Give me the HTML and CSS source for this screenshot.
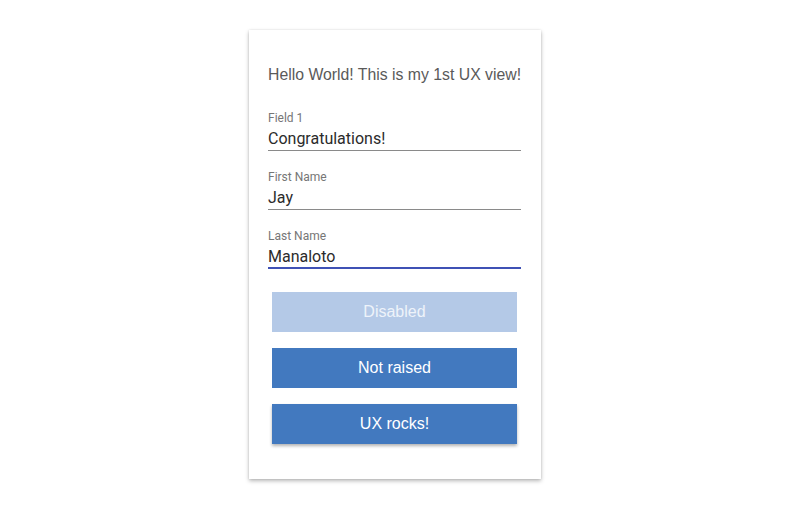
FILE: index.html
```html
<!DOCTYPE html>
<html>
<head>
<meta charset="utf-8">
<link rel="stylesheet" href="styles.css">
</head>
<body>
<div class="card">
  <div class="title">Hello World! This is my 1st UX view!</div>
  <div class="field">
    <div class="label">Field 1</div>
    <div class="value">Congratulations!</div>
  </div>
  <div class="field">
    <div class="label">First Name</div>
    <div class="value">Jay</div>
  </div>
  <div class="field focused">
    <div class="label">Last Name</div>
    <div class="value">Manaloto</div>
  </div>
  <div class="buttons">
    <div class="btn disabled">Disabled</div>
    <div class="btn">Not raised</div>
    <div class="btn raised">UX rocks!</div>
  </div>
</div>
</body>
</html>
```
FILE: styles.css
```css
html, body {
  margin: 0;
  padding: 0;
  background: #ffffff;
}
body {
  padding: 30px 0 20px;
}
.card {
  box-sizing: border-box;
  width: 292px;
  height: 449px;
  margin: 0 auto;
  padding: 35px 20px 0 19px;
  background: #ffffff;
  box-shadow: 0 2px 4px rgba(0,0,0,0.28), 0 0 2px rgba(0,0,0,0.10);
}
.title {
  font-family: "Liberation Sans", Arial, sans-serif;
  font-size: 15.8px;
  line-height: 20px;
  color: #5a5a5a;
  margin-bottom: 25px;
  white-space: nowrap;
}
.field {
  margin-bottom: 18px;
}
.label {
  font-family: Roboto, "Liberation Sans", sans-serif;
  font-size: 12px;
  line-height: 14px;
  color: #767676;
  padding-top: 1px;
}
.value {
  font-family: Roboto, "Liberation Sans", sans-serif;
  font-size: 16px;
  line-height: 20px;
  color: #2b2b2b;
  margin-top: 4px;
  padding-bottom: 1px;
  border-bottom: 1px solid #8a8a8a;
}
.field.focused .value {
  padding-bottom: 0;
  border-bottom: 2px solid #3f51b5;
}
.buttons {
  display: flex;
  flex-direction: column;
  gap: 16px;
  margin: 23px 4px 0 4px;
}
.btn {
  height: 40px;
  display: flex;
  align-items: center;
  justify-content: center;
  background: #4279bf;
  color: #ffffff;
  font-family: "Liberation Sans", Arial, sans-serif;
  font-size: 16px;
}
.btn.disabled {
  background: #b4c9e7;
  color: #eef3fa;
}
.btn.raised {
  box-shadow: 0 2px 3px rgba(0,0,0,0.3);
}
```
